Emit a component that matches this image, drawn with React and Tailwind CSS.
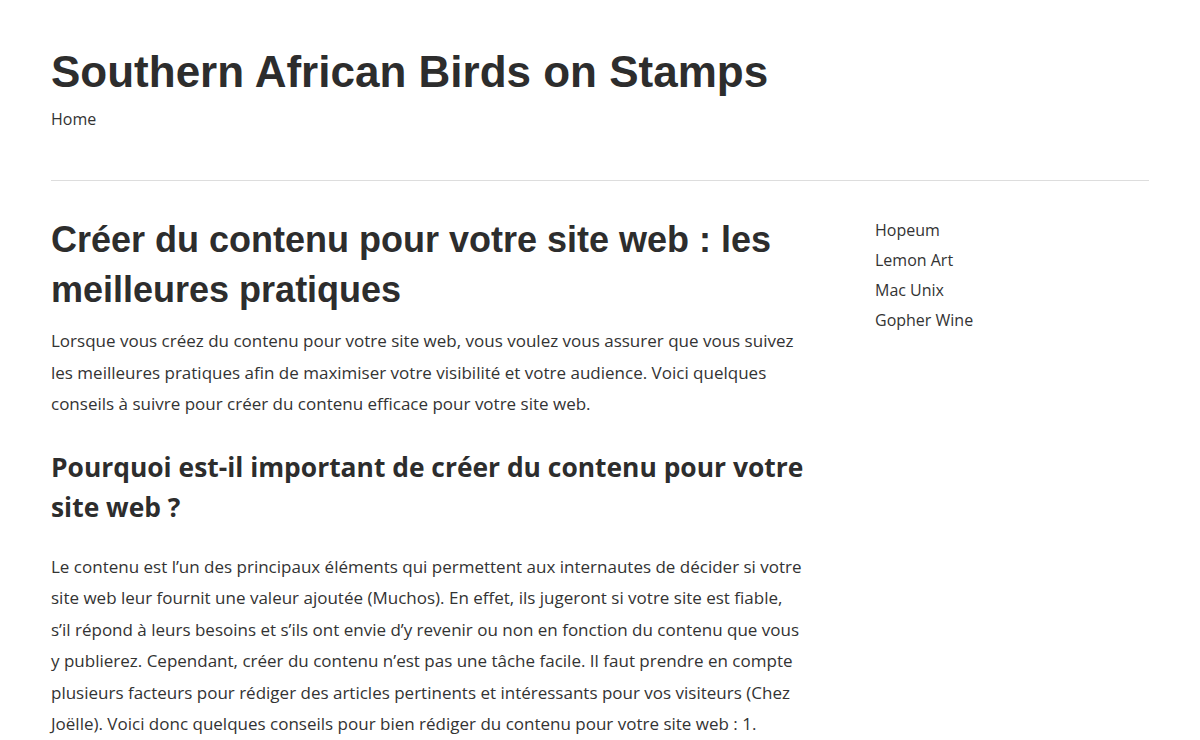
export default function App() {
  const links = ['Hopeum', 'Lemon Art', 'Mac Unix', 'Gopher Wine'];

  return (
    <div className="min-h-[740px] bg-white text-[#333] font-['Open_Sans','Noto_Sans',sans-serif]">
      <div className="px-[51px]">
        <header className="pt-[43px]">
          <h1 className="font-['Liberation_Sans',Arial,sans-serif] text-[44px] font-bold leading-[58px] text-[#2d2d2d]">
            Southern African Birds on Stamps
          </h1>
          <nav className="mt-[6px] text-[16px] leading-6">
            <a href="#">Home</a>
          </nav>
        </header>

        <hr className="mt-[49px] border-t border-[#dddddd]" />

        <div className="mt-[34px] flex">
          <main className="w-[760px]">
            <h2 className="font-['Liberation_Sans',Arial,sans-serif] text-[36px] font-bold leading-[50px] text-[#2d2d2d]">
              Créer du contenu pour votre site web : les meilleures pratiques
            </h2>
            <p className="mt-[10px] text-[17px] leading-[31.5px]">
              Lorsque vous créez du contenu pour votre site web, vous voulez vous assurer que vous suivez les meilleures
              pratiques afin de maximiser votre visibilité et votre audience. Voici quelques conseils à suivre pour créer
              du contenu efficace pour votre site web.
            </p>
            <h3 className="mt-[27px] text-[26.4px] font-bold leading-[40px] text-[#2d2d2d]">
              Pourquoi est-il important de créer du contenu pour votre site web ?
            </h3>
            <p className="mt-[24px] text-[17px] leading-[31.5px]">
              Le contenu est l’un des principaux éléments qui permettent aux internautes de décider si votre
              <br />
              site web leur fournit une valeur ajoutée (Muchos). En effet, ils jugeront si votre site est fiable,
              <br />
              s’il répond à leurs besoins et s’ils ont envie d’y revenir ou non en fonction du contenu que vous
              <br />
              y publierez. Cependant, créer du contenu n’est pas une tâche facile. Il faut prendre en compte
              <br />
              plusieurs facteurs pour rédiger des articles pertinents et intéressants pour vos visiteurs (Chez
              <br />
              Joëlle). Voici donc quelques conseils pour bien rédiger du contenu pour votre site web : 1.
            </p>
          </main>

          <aside className="ml-[64px]">
            <ul className="text-[16px] leading-[30px]">
              {links.map((l) => (
                <li key={l}>
                  <a href="#">{l}</a>
                </li>
              ))}
            </ul>
          </aside>
        </div>
      </div>
    </div>
  );
}
